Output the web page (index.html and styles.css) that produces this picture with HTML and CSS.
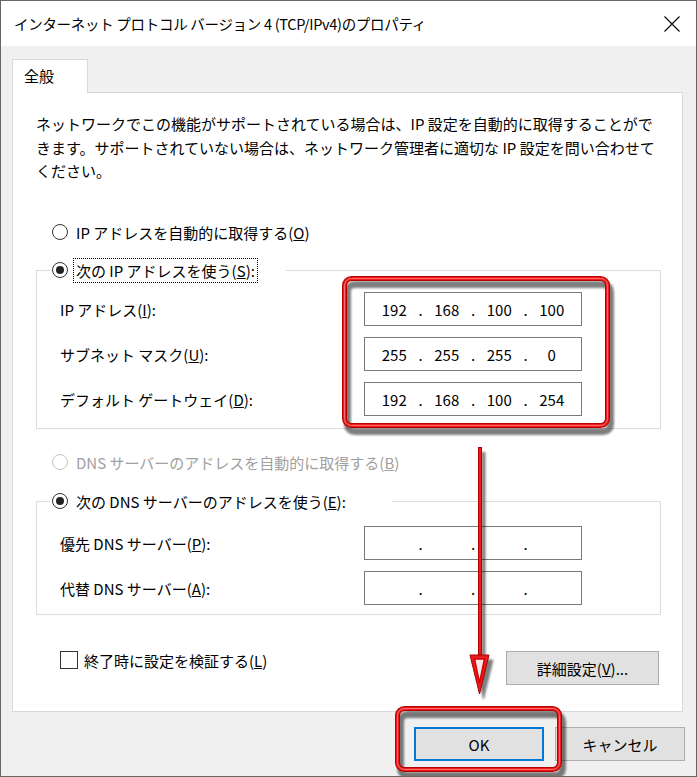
FILE: index.html
```html
<!DOCTYPE html>
<html lang="ja">
<head>
    <meta charset="UTF-8">
    <title>インターネット プロトコル バージョン 4 (TCP/IPv4)のプロパティ</title>
    <link rel="stylesheet" href="styles.css">
</head>
<body>
    <div class="window">
        <div class="titlebar">
            <span class="title">インターネット プロトコル バージョン 4 (TCP/IPv4)のプロパティ</span>
            <svg class="close" viewBox="0 0 16 16">
                <path d="M0.5 0.5 L15.5 15.5 M15.5 0.5 L0.5 15.5"/>
            </svg>
        </div>

        <div class="content">
            <div class="tabs">
                <div class="tab">全般</div>
            </div>

            <div class="panel">
                <p class="desc">ネットワークでこの機能がサポートされている場合は、IP 設定を自動的に取得することがで<br>きます。サポートされていない場合は、ネットワーク管理者に適切な IP 設定を問い合わせて<br>ください。</p>

                <div class="option first">
                    <span class="radio"></span>
                    <span>IP アドレスを自動的に取得する(<u>O</u>)</span>
                </div>

                <fieldset class="group group-ip">
                    <legend class="legend-ip">
                        <div class="option">
                            <span class="radio checked"></span>
                            <span class="focus">次の IP アドレスを使う(<u>S</u>):</span>
                        </div>
                    </legend>
                    <div class="rows rows-ip">
                        <span>IP アドレス(<u>I</u>):</span>
                        <div class="ip"><span>192</span><i>.</i><span>168</span><i>.</i><span>100</span><i>.</i><span>100</span></div>
                        <span>サブネット マスク(<u>U</u>):</span>
                        <div class="ip"><span>255</span><i>.</i><span>255</span><i>.</i><span>255</span><i>.</i><span>0</span></div>
                        <span>デフォルト ゲートウェイ(<u>D</u>):</span>
                        <div class="ip"><span>192</span><i>.</i><span>168</span><i>.</i><span>100</span><i>.</i><span>254</span></div>
                    </div>
                </fieldset>

                <div class="option disabled dns-auto">
                    <span class="radio"></span>
                    <span>DNS サーバーのアドレスを自動的に取得する(<u>B</u>)</span>
                </div>

                <fieldset class="group group-dns">
                    <legend class="legend-dns">
                        <div class="option">
                            <span class="radio checked"></span>
                            <span>次の DNS サーバーのアドレスを使う(<u>E</u>):</span>
                        </div>
                    </legend>
                    <div class="rows rows-dns">
                        <span>優先 DNS サーバー(<u>P</u>):</span>
                        <div class="ip"><span></span><i>.</i><span></span><i>.</i><span></span><i>.</i><span></span></div>
                        <span>代替 DNS サーバー(<u>A</u>):</span>
                        <div class="ip"><span></span><i>.</i><span></span><i>.</i><span></span><i>.</i><span></span></div>
                    </div>
                </fieldset>

                <div class="extra">
                    <label class="check">
                        <span class="box"></span>
                        <span>終了時に設定を検証する(<u>L</u>)</span>
                    </label>
                    <button class="btn btn-detail">詳細設定(<u>V</u>)...</button>
                </div>
            </div>

            <div class="actions">
                <button class="btn btn-ok">OK</button>
                <button class="btn">キャンセル</button>
            </div>
        </div>

        <!-- annotation marks drawn over the dialog -->
        <svg class="marks" viewBox="0 0 697 777">
            <defs>
                <filter id="soft"><feGaussianBlur stdDeviation="0.8"/></filter>
            </defs>
            <g class="shade" filter="url(#soft)">
                <rect x="347.5" y="284.5" width="263" height="147" rx="7" fill="none" stroke-width="7"/>
                <line x1="483.5" y1="452" x2="483.5" y2="662" stroke-width="4"/>
                <polygon points="474,660 493,660 483.5,699"/>
                <rect x="400.5" y="714.5" width="162" height="61" rx="7" fill="none" stroke-width="7"/>
            </g>
            <g fill="none">
                <rect x="344.5" y="278.5" width="263" height="147" rx="7" stroke="#b30000" stroke-width="5"/>
                <rect x="344.5" y="278.5" width="263" height="147" rx="7" stroke="#ee1c1c" stroke-width="3"/>
                <rect x="344.5" y="278.5" width="263" height="147" rx="7" stroke="#ff6a6a" stroke-width="1"/>

                <rect x="397.5" y="708.5" width="162" height="61" rx="7" stroke="#b30000" stroke-width="5"/>
                <rect x="397.5" y="708.5" width="162" height="61" rx="7" stroke="#ee1c1c" stroke-width="3"/>
                <rect x="397.5" y="708.5" width="162" height="61" rx="7" stroke="#ff6a6a" stroke-width="1"/>

                <line x1="480" y1="447" x2="480" y2="658" stroke="#b30000" stroke-width="4"/>
                <line x1="480" y1="448" x2="480" y2="658" stroke="#ee1c1c" stroke-width="2"/>
            </g>
            <polygon points="470,655 489,655 479.5,694" fill="#e81c1c" stroke="#a80000" stroke-width="1"/>
            <polygon points="474.5,659 484.5,659 479.5,683" fill="#ffe6e6" stroke="#d40000" stroke-width="1.5"/>
        </svg>
    </div>
</body>
</html>
```

FILE: styles.css
```css
* {
    box-sizing: border-box;
}

body {
    margin: 0;
    font-family: "Noto Sans CJK JP", "Noto Sans", sans-serif;
    font-size: 15px;
    color: #000;
    background: #f0f0f0;
}

.window {
    position: relative;
    width: 697px;
    height: 777px;
    border: 1px solid #666;
    background: #f0f0f0;
    overflow: hidden;
}

.titlebar {
    height: 45px;
    background: #fff;
    display: flex;
    align-items: center;
    justify-content: space-between;
    padding: 0 16px 0 13px;
}

.title {
    font-size: 14.5px;
    letter-spacing: -0.3px;
    line-height: 20px;
    white-space: nowrap;
}

.close {
    width: 16px;
    height: 16px;
    fill: none;
    stroke: #000;
    stroke-width: 1.1;
}

.content {
    padding: 13px 0 0 11px;
}

.tabs {
    display: flex;
}

.tab {
    position: relative;
    z-index: 1;
    width: 76px;
    height: 34px;
    margin-bottom: -1px;
    padding-left: 11px;
    line-height: 32px;
    background: #fff;
    border: 1px solid #d9d9d9;
    border-bottom: none;
}

.panel {
    width: 671px;
    height: 620px;
    padding: 19px 0 0 23px;
    background: #fff;
    border: 1px solid #d9d9d9;
}

.desc {
    margin: 0;
    line-height: 23.5px;
    white-space: nowrap;
}

.option {
    display: flex;
    align-items: center;
    gap: 8px;
    height: 24px;
    margin-left: 16px;
    white-space: nowrap;
}

.option.first {
    margin-top: 37.5px;
}

.radio {
    width: 16px;
    height: 16px;
    border: 1px solid #333;
    border-radius: 50%;
    background: #fff;
    display: flex;
    align-items: center;
    justify-content: center;
    flex: none;
}

.radio.checked::after {
    content: "";
    width: 8px;
    height: 8px;
    border-radius: 50%;
    background: #222;
}

.disabled {
    color: #a0a0a0;
}

.disabled .radio {
    border-color: #c4c4c4;
}

.dns-auto {
    margin-top: 21px;
}

.focus {
    outline: 1px dotted #000;
    outline-offset: 0;
    padding: 0 2px;
    margin-left: -2px;
    line-height: 23px;
}

.group {
    width: 625px;
    margin: 0;
    padding: 0;
    min-width: 0;
    border: 1px solid #dcdcdc;
}

.group-ip {
    margin-top: 13.5px;
}

.group-dns {
    margin-top: 14.5px;
}

legend {
    margin-left: 13px;
    padding: 0 0 0 2px;
    height: 25px;
}

legend .option {
    margin-left: 0;
    height: 25px;
}

.legend-ip {
    width: 236px;
}

.legend-dns {
    width: 342px;
}

.rows {
    display: grid;
    grid-template-columns: 304px 218px;
    row-gap: 11px;
    align-items: center;
    padding-left: 23px;
    white-space: nowrap;
}

.rows-ip {
    padding-top: 9.5px;
    padding-bottom: 12px;
}

.rows-dns {
    padding-top: 12.5px;
    padding-bottom: 9px;
}

.ip {
    height: 34px;
    border: 1px solid #7a7a7a;
    display: flex;
    justify-content: center;
    align-items: center;
}

.ip span {
    width: 44px;
    text-align: center;
}

.ip i {
    font-style: normal;
    width: 8.5px;
    text-align: center;
}

.extra {
    display: flex;
    justify-content: space-between;
    align-items: flex-start;
    width: 623px;
    margin-top: 35px;
    padding-left: 24px;
}

.check {
    display: flex;
    align-items: center;
    gap: 6px;
    height: 20px;
    white-space: nowrap;
}

.box {
    width: 18px;
    height: 18px;
    border: 1px solid #333;
    background: #fff;
}

.btn {
    height: 34px;
    font-family: inherit;
    font-size: 15px;
    color: #000;
    background: #e1e1e1;
    border: 1px solid #adadad;
    padding: 0;
}

.btn-detail {
    width: 153px;
    margin-top: 1px;
}

.actions {
    display: flex;
    justify-content: flex-end;
    gap: 11px;
    width: 673px;
    margin-top: 15px;
}

.actions .btn {
    width: 130px;
}

.btn-ok {
    border: 2px solid #0078d7;
}

.marks {
    position: absolute;
    top: -1px;
    left: -1px;
    width: 697px;
    height: 777px;
    pointer-events: none;
}

.shade {
    opacity: 0.5;
    stroke: #000;
    fill: #000;
}
```
